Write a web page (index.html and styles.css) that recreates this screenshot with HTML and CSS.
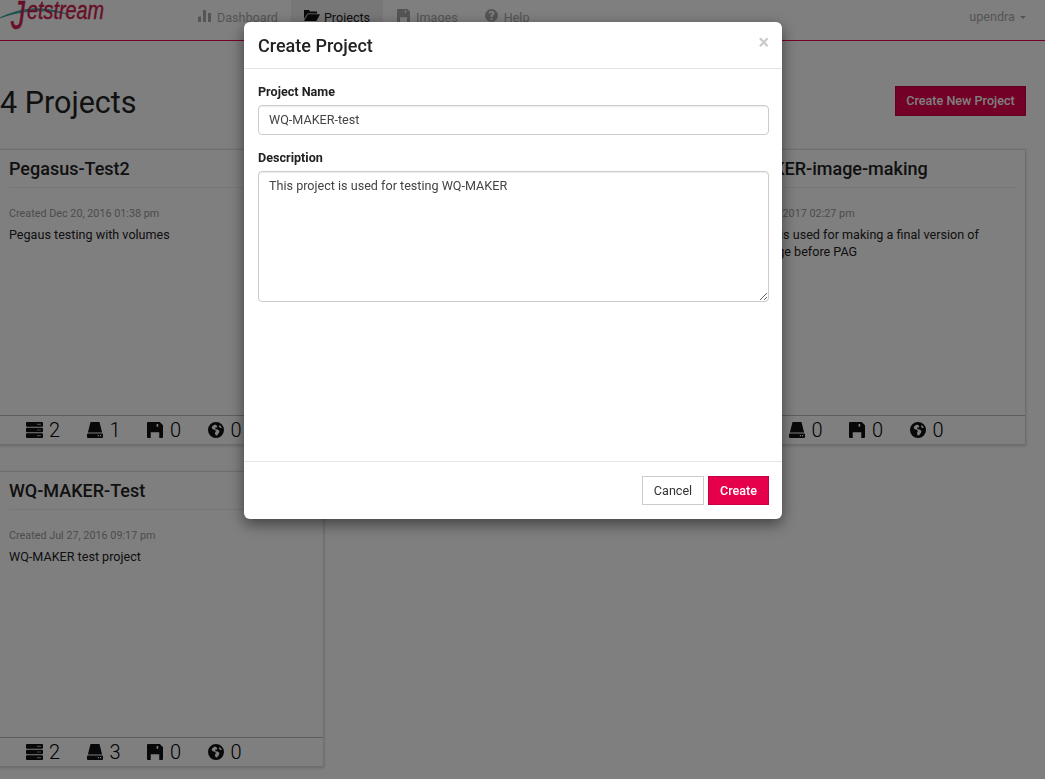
FILE: index.html
```html
<!DOCTYPE html>
<html lang="en">
<head>
    <meta charset="UTF-8">
    <title>Projects</title>
    <link rel="stylesheet" href="styles.css">
</head>
<body>
    <svg class="icon-defs" width="0" height="0">
        <symbol id="i-server" viewBox="0 0 17 16">
            <path fill-rule="evenodd" d="M1 0h15a1 1 0 0 1 1 1v2.800a1 1 0 0 1-1 1H1a1 1 0 0 1-1-1V1a1 1 0 0 1 1-1zm12.500 1.800v1.200h1V1.800zm-2 0v1.200h1V1.800zM1 5.700h15a1 1 0 0 1 1 1v2.600a1 1 0 0 1-1 1H1a1 1 0 0 1-1-1V6.700a1 1 0 0 1 1-1zm12.500 1.700v1.200h1V7.400zm-2 0v1.200h1V7.400zM1 11.200h15a1 1 0 0 1 1 1V15a1 1 0 0 1-1 1H1a1 1 0 0 1-1-1v-2.800a1 1 0 0 1 1-1zm12.500 1.800v1.200h1V13zm-2 0v1.200h1V13z"/>
        </symbol>
        <symbol id="i-hdd" viewBox="0 0 16 16">
            <path fill-rule="evenodd" d="M3.500 0h9l2.600 10.600H.9zM1 11.400h14a1 1 0 0 1 1 1V15a1 1 0 0 1-1 1H1a1 1 0 0 1-1-1v-2.600a1 1 0 0 1 1-1zm9.800 1.700v1.200H12v-1.200zm2.200 0v1.200h1.200v-1.200z"/>
        </symbol>
        <symbol id="i-floppy" viewBox="0 0 15 15">
            <path fill-rule="evenodd" d="M0 1a1 1 0 0 1 1-1h11l3 3v11a1 1 0 0 1-1 1H1a1 1 0 0 1-1-1zm9 .8v2.600h1.500V1.800zM3.500 9.500V15h8V9.500z"/>
        </symbol>
        <symbol id="i-globe" viewBox="0 0 16 16">
            <path fill-rule="evenodd" d="M8 0a8 8 0 1 1 0 16A8 8 0 0 1 8 0zM7 2.500 4.500 4 3.600 6l1.600 1.400 2 .3.600 1.600-.9 1.600.7 2.300 1.400.2 1.900-2.400.6-2-1.800-1.400-2-.4-.8-1.400 1.400-.4 1-.2-.3-1.400zM11.500 3 11 4.800l1.500 1.100 1.300.2A6 6 0 0 0 11.500 3z"/>
        </symbol>
    </svg>

    <nav class="navbar">
        <svg class="logo" width="110" height="40" viewBox="0 0 110 40">
            <path class="logo-swoosh" d="M0 17.500 C9 13 20 9.500 31 8.500 C44 7.500 58 10 72 15.500 C58 12 44 10.500 31 11.500 C20 12.500 9 15 0 18.500z"/>
            <text class="logo-j" transform="translate(11 29) scale(.7 1)">J</text>
            <text class="logo-text" x="27" y="18.500" textLength="77" lengthAdjust="spacingAndGlyphs">etstream</text>
        </svg>
        <ul class="nav-links">
            <li class="nav-item">
                <svg class="nav-icon" width="15" height="12" viewBox="0 0 15 12"><path d="M0 6.500h3V12H0zM5 0h3v12H5zM10 3h3v9h-3z"/></svg>
                Dashboard
            </li>
            <li class="nav-item active">
                <svg class="nav-icon" width="16" height="11" viewBox="0 0 16 11"><path d="M0 0h5l1 1.500h7V3.500H3.500L0 9zM3.800 4.300H16L12.500 11H0z"/></svg>
                Projects
            </li>
            <li class="nav-item">
                <svg class="nav-icon" width="15" height="13" viewBox="0 0 15 13"><use href="#i-floppy" width="13" height="13"/></svg>
                Images
            </li>
            <li class="nav-item">
                <svg class="nav-icon" width="15" height="13" viewBox="0 0 15 13"><path fill-rule="evenodd" d="M6.500 0a6.500 6.500 0 1 1 0 13 6.500 6.500 0 0 1 0-13zM5.500 9.200v2h2v-2zM6.500 2C5 2 3.900 2.800 3.700 4.200l1.800.3c.1-.6.400-.9 1-.9s.9.300.9.700c0 .9-1.900 1-1.900 3.200v.5h2v-.4c0-1.400 1.900-1.500 1.900-3.500C9.400 2.900 8.100 2 6.500 2z"/></svg>
                Help
            </li>
        </ul>
        <div class="nav-user">upendra <span class="caret"></span></div>
    </nav>

    <main class="content">
        <div class="page-head">
            <h1>4 Projects</h1>
            <button class="btn btn-primary btn-new">Create New Project</button>
        </div>

        <div class="project-grid">
            <div class="project-card">
                <h2>Pegasus-Test2</h2>
                <p class="created">Created Dec 20, 2016 01:38 pm</p>
                <p class="desc">Pegaus testing with volumes</p>
                <div class="resources">
                    <span><svg class="ic-server"><use href="#i-server"/></svg>2</span>
                    <span><svg><use href="#i-hdd"/></svg>1</span>
                    <span><svg><use href="#i-floppy"/></svg>0</span>
                    <span><svg><use href="#i-globe"/></svg>0</span>
                </div>
            </div>
            <div class="project-card">
                <h2>Docker-test</h2>
                <p class="created">Created Nov 02, 2016 10:12 am</p>
                <p class="desc">Docker testing</p>
                <div class="resources">
                    <span><svg class="ic-server"><use href="#i-server"/></svg>1</span>
                    <span><svg><use href="#i-hdd"/></svg>0</span>
                    <span><svg><use href="#i-floppy"/></svg>0</span>
                    <span><svg><use href="#i-globe"/></svg>0</span>
                </div>
            </div>
            <div class="project-card">
                <h2>WQ-MAKER-image-making</h2>
                <p class="created">Created Jan 9, 2017 02:27 pm</p>
                <p class="desc">This project is used for making a final version of MAKER image before PAG</p>
                <div class="resources">
                    <span><svg class="ic-server"><use href="#i-server"/></svg>1</span>
                    <span><svg><use href="#i-hdd"/></svg>0</span>
                    <span><svg><use href="#i-floppy"/></svg>0</span>
                    <span><svg><use href="#i-globe"/></svg>0</span>
                </div>
            </div>
            <div class="project-card">
                <h2>WQ-MAKER-Test</h2>
                <p class="created">Created Jul 27, 2016 09:17 pm</p>
                <p class="desc">WQ-MAKER test project</p>
                <div class="resources">
                    <span><svg class="ic-server"><use href="#i-server"/></svg>2</span>
                    <span><svg><use href="#i-hdd"/></svg>3</span>
                    <span><svg><use href="#i-floppy"/></svg>0</span>
                    <span><svg><use href="#i-globe"/></svg>0</span>
                </div>
            </div>
        </div>
    </main>

    <div class="backdrop"></div>

    <div class="modal">
        <div class="modal-header">
            <h3>Create Project</h3>
            <span class="close">&times;</span>
        </div>
        <div class="modal-body">
            <label for="project-name">Project Name</label>
            <input type="text" id="project-name" value="WQ-MAKER-test">
            <label for="project-desc">Description</label>
            <textarea id="project-desc">This project is used for testing WQ-MAKER</textarea>
        </div>
        <div class="modal-footer">
            <button class="btn btn-default">Cancel</button>
            <button class="btn btn-primary">Create</button>
        </div>
    </div>
</body>
</html>
```

FILE: styles.css
```css
* {
    box-sizing: border-box;
}
html, body {
    height: 100%;
    overflow: hidden;
}
body {
    font-family: 'Roboto', 'Liberation Sans', sans-serif;
    font-size: 12.6px;
    color: #222;
    background-color: #fff;
    margin: 0;
}
.icon-defs {
    position: absolute;
}

/* top bar */
.navbar {
    display: flex;
    height: 41px;
    border-bottom: 1px solid #e6004c;
    background-color: #fff;
}
.logo {
    flex: none;
    overflow: hidden;
}
.logo-swoosh {
    fill: #3aa6a0;
}
.logo-j {
    font-family: 'Liberation Sans', sans-serif;
    font-style: italic;
    font-size: 40px;
    fill: #cf1f52;
    stroke: #cf1f52;
    stroke-width: 0.6;
}
.logo-text {
    font-family: 'Liberation Sans', sans-serif;
    font-style: italic;
    font-size: 25px;
    fill: #cf1f52;
    stroke: #cf1f52;
    stroke-width: 0.5;
}
.nav-links {
    display: flex;
    list-style: none;
    margin: 0 0 0 75px;
    padding: 0;
}
.nav-item {
    display: flex;
    align-items: center;
    gap: 4px;
    height: 40px;
    padding: 0 13px 6px;
    color: #aaa;
    fill: #aaa;
}
.nav-item:nth-child(3) {
    padding: 0 14px 6px;
}
.nav-item.active {
    background-color: #eee;
    color: #222;
    fill: #111;
}
.nav-icon {
    flex: none;
    margin-top: -3px;
}
.nav-user {
    margin-left: auto;
    padding: 9px 19px 0 0;
    color: #aaa;
}
.caret {
    display: inline-block;
    margin-left: 2px;
    vertical-align: middle;
    border-top: 3px solid #aaa;
    border-left: 3px solid transparent;
    border-right: 3px solid transparent;
}

/* project list */
.content {
    margin-left: -1px;
    padding-right: 19px;
}
.page-head {
    display: flex;
    justify-content: space-between;
    align-items: center;
    height: 108px;
    padding: 12px 0 0 1px;
}
h1 {
    font-size: 30.5px;
    font-weight: 400;
    margin: 2px 0 0;
}
.btn {
    font-family: inherit;
    font-size: 12.6px;
    font-weight: 500;
    border-radius: 0;
    border: 1px solid #ccc;
    padding: 0;
    height: 29px;
    width: 61px;
}
.btn-primary {
    background-color: #e6004c;
    border-color: #c80042;
    color: #fff;
}
.btn-default {
    background-color: #fff;
    color: #333;
    font-weight: 400;
    width: 62px;
}
.btn-new {
    height: 30px;
    width: 131px;
    padding-bottom: 2px;
}
.project-grid {
    display: grid;
    grid-template-columns: repeat(3, 1fr);
    gap: 26px;
}
.project-card {
    display: flex;
    flex-direction: column;
    height: 296px;
    padding: 10px 9px 0;
    background-color: #fff;
    border: 1px solid #ddd;
    box-shadow: 0 1px 3px rgba(0, 0, 0, 0.2);
}
.project-card h2 {
    font-size: 18px;
    font-weight: 500;
    line-height: 18px;
    margin: 0;
    padding-bottom: 9px;
    border-bottom: 1px solid #eee;
}
.created {
    font-size: 10.8px;
    line-height: 14px;
    color: #999;
    margin: 19px 0 0;
}
.desc {
    line-height: 17px;
    margin: 5px 0 0;
}
.resources {
    display: flex;
    margin: auto -9px 0;
    height: 29px;
    padding-left: 26px;
    border-top: 1px solid #bbb;
    background-color: #fff;
    font-size: 20px;
    font-weight: 300;
    color: #000;
    line-height: 28px;
}
.resources span {
    display: flex;
    align-items: center;
    gap: 7px;
    width: 60.5px;
}
.resources svg {
    width: 16px;
    height: 16px;
    fill: #111;
}
.resources .ic-server {
    width: 17px;
    margin-right: -1px;
}

/* dialog */
.backdrop {
    position: fixed;
    inset: 0;
    background-color: rgba(0, 0, 0, 0.5);
}
.modal {
    position: fixed;
    left: 244px;
    top: 22px;
    width: 538px;
    height: 497px;
    display: flex;
    flex-direction: column;
    background-color: #fff;
    border-radius: 6px;
    box-shadow: 0 5px 15px rgba(0, 0, 0, 0.5);
}
.modal-header {
    display: flex;
    justify-content: space-between;
    align-items: center;
    height: 47px;
    padding: 0 13px 0 14px;
    border-bottom: 1px solid #e5e5e5;
}
.modal-header h3 {
    font-size: 18px;
    font-weight: 500;
    margin: 0;
}
.close {
    font-size: 20px;
    font-weight: 700;
    color: #ccc;
    margin-top: -7px;
}
.modal-body {
    flex: 1;
    display: flex;
    flex-direction: column;
    padding: 15px 13px 0 14px;
}
.modal-body label {
    font-size: 12.6px;
    font-weight: 700;
    line-height: 16px;
    margin-bottom: 5px;
}
.modal-body input, .modal-body textarea {
    font-family: inherit;
    font-size: 12.6px;
    color: #444;
    width: 100%;
    padding: 6px 10px;
    border: 1px solid #ccc;
    border-radius: 4px;
    box-shadow: inset 0 1px 1px rgba(0, 0, 0, 0.075);
}
.modal-body input {
    height: 30px;
    padding-bottom: 8px;
    margin-bottom: 15px;
}
.modal-body textarea {
    height: 131px;
}
.modal-footer {
    display: flex;
    justify-content: flex-end;
    gap: 4px;
    height: 58px;
    padding: 14px 13px 0 0;
    border-top: 1px solid #e5e5e5;
}
```
